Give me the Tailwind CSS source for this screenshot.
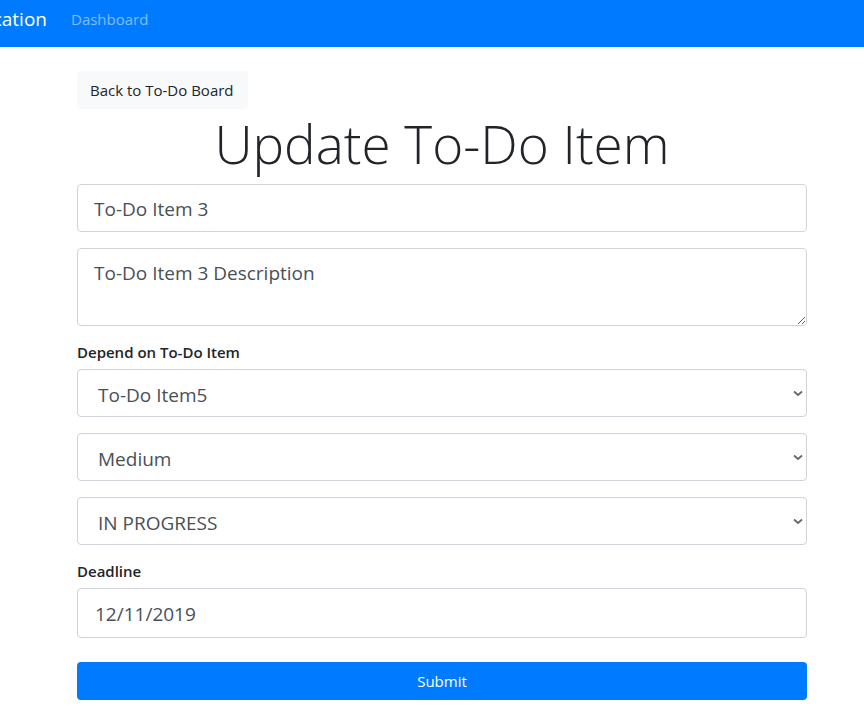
<!DOCTYPE html>
<html lang="en">
<head>
<meta charset="utf-8">
<meta name="viewport" content="width=device-width, initial-scale=1">
<title>Update To-Do Item</title>
<script src="https://cdn.jsdelivr.net/npm/@tailwindcss/browser@4"></script>
</head>
<body class="bg-white font-['Open_Sans',sans-serif] text-[15px] leading-6 text-[#212529]">
<nav class="flex h-[47px] items-center bg-[#007bff] pb-[10px]">
  <a href="#" class="flex w-[47px] justify-end overflow-hidden text-[19px] leading-8 whitespace-nowrap text-white">Application</a>
  <a href="#" class="ml-6 text-white/50">Dashboard</a>
</nav>
<main class="pt-6 pr-[57px] pb-5 pl-[77px]">
  <a href="#" class="inline-flex h-[38px] min-w-[171px] items-center rounded bg-[#f8f9fa] px-[13px]">Back to To-Do Board</a>
  <h1 class="h-[75px] pt-[2px] text-center text-[53px] leading-[66px] font-light">Update To-Do Item</h1>
  <form class="text-[#495057]">
    <input type="text" aria-label="Item name" value="To-Do Item 3" class="mb-4 block h-12 w-full rounded border border-[#ced4da] px-4 pt-[2px] text-[19px]">
    <textarea aria-label="Description" class="mb-4 block h-[78px] w-full resize rounded border border-[#ced4da] px-4 py-2 text-[19px] leading-8">To-Do Item 3 Description</textarea>
    <label for="depend" class="mb-1 block h-[23px] leading-5 font-semibold text-[#212529]">Depend on To-Do Item</label>
    <div class="relative mb-4">
      <select id="depend" class="block h-12 w-full appearance-none rounded border border-[#ced4da] bg-white px-5 pt-1 text-[19px]"><option>To-Do Item5</option></select>
      <svg class="pointer-events-none absolute top-[21px] right-1 h-2 w-[10px]" viewBox="0 0 10 8" fill="none" stroke="#666" stroke-width="1.7"><path d="M1 1.5 5 5 9 1.5"/></svg>
    </div>
    <div class="relative mb-4">
      <select aria-label="Priority" class="block h-12 w-full appearance-none rounded border border-[#ced4da] bg-white px-5 pt-1 text-[19px]"><option>Medium</option></select>
      <svg class="pointer-events-none absolute top-[21px] right-1 h-2 w-[10px]" viewBox="0 0 10 8" fill="none" stroke="#666" stroke-width="1.7"><path d="M1 1.5 5 5 9 1.5"/></svg>
    </div>
    <div class="relative mb-4">
      <select aria-label="Status" class="block h-12 w-full appearance-none rounded border border-[#ced4da] bg-white px-5 pt-1 text-[19px]"><option>IN PROGRESS</option></select>
      <svg class="pointer-events-none absolute top-[21px] right-1 h-2 w-[10px]" viewBox="0 0 10 8" fill="none" stroke="#666" stroke-width="1.7"><path d="M1 1.5 5 5 9 1.5"/></svg>
    </div>
    <label for="deadline" class="mb-1 block h-[23px] leading-5 font-semibold text-[#212529]">Deadline</label>
    <input id="deadline" type="text" value="12/11/2019" class="mb-6 block h-[50px] w-full rounded border border-[#ced4da] px-[17px] pt-[2px] text-[19px]">
    <button type="submit" class="block h-[38px] w-full rounded bg-[#007bff] text-white">Submit</button>
  </form>
</main>
</body>
</html>
